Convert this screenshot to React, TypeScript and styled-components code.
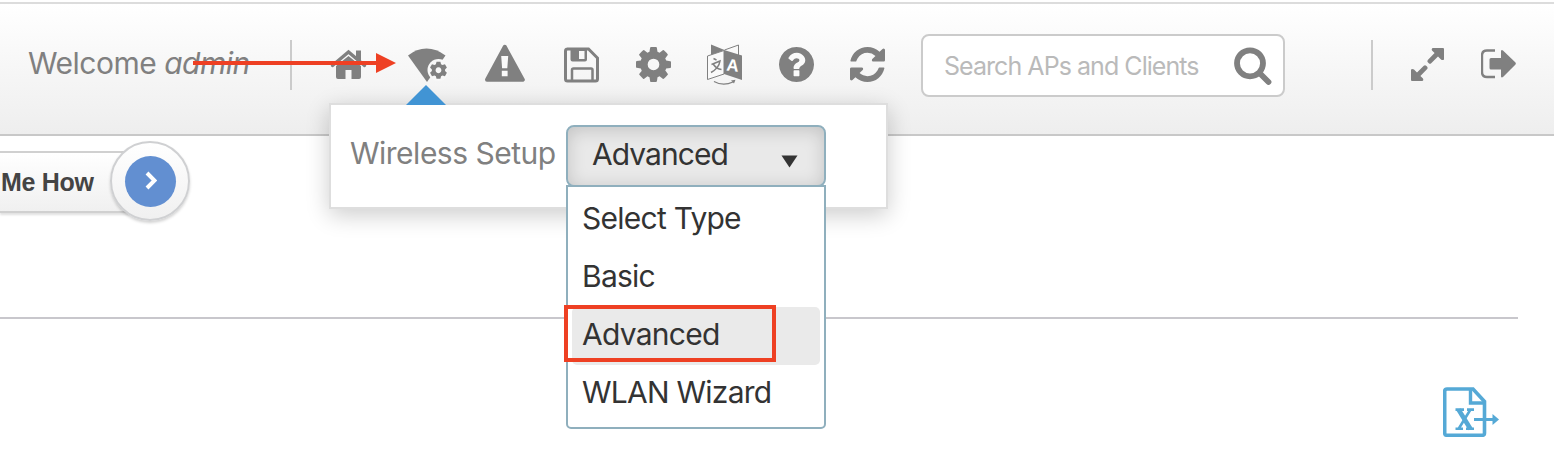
import React from 'react';
import styled, { createGlobalStyle } from 'styled-components';

const grey = '#808080';
const red = '#ee4023';

const GlobalStyle = createGlobalStyle`
  * { box-sizing: border-box; }
  body {
    margin: 0;
    background: #fff;
    overflow: hidden;
    font-family: Inter, 'Liberation Sans', sans-serif;
    font-weight: 400;
  }
`;

const Page = styled.div`
  position: relative;
  width: 1554px;
  height: 462px;
  padding-top: 2px;
  overflow: hidden;
`;

const Header = styled.header`
  display: flex;
  align-items: flex-start;
  height: 134px;
  padding: 30px 0 0 28px;
  border-top: 2px solid #dcdcdc;
  border-bottom: 2px solid #c8c8c8;
  background: linear-gradient(#fff, #eeeeee);
`;

const Welcome = styled.div`
  width: 262px;
  height: 60px;
  line-height: 58px;
  font-size: 30px;
  letter-spacing: -0.5px;
  color: ${grey};
  white-space: nowrap;
`;

const Divider = styled.div`
  width: 2px;
  height: 50px;
  margin-top: 6px;
  background: #cbcbcb;
`;

const IconButton = styled.button<{ $gap: number; $width: number }>`
  flex: none;
  width: ${(p) => p.$width}px;
  height: 48px;
  margin: 6px 0 0 ${(p) => p.$gap}px;
  padding: 0;
  border: 0;
  background: none;
  color: ${grey};
  svg { display: block; }
`;

const SearchBox = styled.label`
  display: flex;
  flex: none;
  align-items: center;
  justify-content: space-between;
  width: 364px;
  height: 63px;
  margin: 0 86px 0 36px;
  padding: 0 11px 0 21px;
  border: 2px solid #cbcbcb;
  border-radius: 8px;
  background: #fff;
`;

const SearchInput = styled.input`
  width: 280px;
  padding: 0;
  border: 0;
  outline: 0;
  background: none;
  font: 400 25px Inter, 'Liberation Sans', sans-serif;
  letter-spacing: -0.95px;
  &::placeholder { color: #bababa; opacity: 1; }
`;

const Popup = styled.section`
  position: absolute;
  left: 329px;
  top: 103px;
  display: flex;
  width: 559px;
  height: 106px;
  padding: 20px 0 0 19px;
  border: 2px solid #dedede;
  background: #fff;
  box-shadow: 0 6px 22px rgba(0, 0, 0, 0.2);
`;

const Pointer = styled.svg`
  position: absolute;
  left: 75px;
  top: -20px;
`;

const PopupLabel = styled.span`
  width: 216px;
  line-height: 57px;
  font-size: 30px;
  letter-spacing: -0.5px;
  color: ${grey};
  white-space: nowrap;
`;

const SelectWrap = styled.div`
  position: relative;
  width: 260px;
`;

const SelectBox = styled.div`
  display: flex;
  justify-content: space-between;
  height: 62px;
  padding: 0 26px 0 24px;
  border: 2px solid #8fafbd;
  border-radius: 8px;
  background: #e9e9e9;
  box-shadow: inset 0 3px 18px rgba(0, 0, 0, 0.17);
  font-size: 30px;
  letter-spacing: -0.95px;
  line-height: 55px;
  color: #333;
  svg { margin-top: 28px; }
`;

const Menu = styled.ul`
  position: absolute;
  left: 0;
  top: 60px;
  width: 260px;
  height: 244px;
  margin: 0;
  padding: 4px;
  border: 2px solid #8fafbd;
  border-radius: 0 0 5px 5px;
  background: #fff;
  list-style: none;
`;

const Option = styled.li<{ $active?: boolean }>`
  height: 58px;
  padding-left: 10px;
  border-radius: 5px;
  background: ${(p) => (p.$active ? '#eaeaea' : 'transparent')};
  font-size: 30px;
  letter-spacing: -0.75px;
  line-height: 54px;
  color: #333;
  white-space: nowrap;
`;

const Highlight = styled.div`
  position: absolute;
  left: 564px;
  top: 305px;
  width: 212px;
  height: 57px;
  border: 4px solid ${red};
`;

const Arrow = styled.svg`
  position: absolute;
  left: 193px;
  top: 53px;
`;

const Content = styled.main`
  display: flex;
  flex-direction: column;
`;

const GuideRow = styled.div`
  display: flex;
  align-items: center;
  height: 91px;
  width: 190px;
`;

const Guide = styled.div`
  display: flex;
  align-items: center;
  flex: 1;
  height: 62px;
  margin-right: -20px;
  padding: 2px 0 0 1px;
  border: solid #d0d0d0;
  border-width: 2px 0;
  background: linear-gradient(#fff, #f0f0f0);
  box-shadow: 0 2px 2px rgba(0, 0, 0, 0.12);
  font: bold 25px 'Liberation Sans', Arial, sans-serif;
  letter-spacing: -0.3px;
  color: #444;
  white-space: nowrap;
`;

const GuideButton = styled.div`
  position: relative;
  display: flex;
  flex: none;
  align-items: center;
  justify-content: center;
  width: 80px;
  height: 80px;
  margin-top: -1px;
  border: 2px solid #cfd0d2;
  border-radius: 50%;
  background: linear-gradient(#fff, #f0f0f0);
  box-shadow: 0 2px 3px rgba(0, 0, 0, 0.18);
`;

const GuideDot = styled.div`
  display: flex;
  align-items: center;
  justify-content: center;
  width: 51px;
  height: 51px;
  border-radius: 50%;
  background: #628fd1;
`;

const Rule = styled.div`
  width: 1518px;
  height: 2px;
  margin-top: 90px;
  background: #c8c7cc;
`;

const ExportRow = styled.div`
  display: flex;
  justify-content: flex-end;
  padding: 67px 54px 0 0;
`;

const HomeIcon = () => (
  <svg width="37" height="48" viewBox="330 40 37 48" fill="currentColor">
    <path d="M336 66 348.500 56 361 66V77q0 2-2 2h-7.500v-9h-6v9H338q-2 0-2-2Z" />
    <path d="M332.500 65.500 348.500 52 364.500 65.500" fill="none" stroke="currentColor" strokeWidth="3.400" strokeLinecap="round" />
    <path d="M356 50.500h5V62l-5-4Z" />
  </svg>
);

const WirelessIcon = () => (
  <svg width="40" height="48" viewBox="408 40 40 48" fill="currentColor">
    <path d="M408 55.500Q416.500 48.500 426.500 48.500T445.500 55.500L427 82Z" />
    <circle cx="438.500" cy="70" r="11" fill="#f8f8f8" />
    <path transform="translate(429.400 60.600) scale(.0108)" fillRule="evenodd" d="M660 100h360l60 230 130 75 230-65 180 310-170 165v150l170 165-180 310-230-65-130 75-60 230H660l-60-230-130-75-230 65L60 1130l170-165V815L60 650l180-310 230 65 130-75ZM840 620a270 270 0 1 0 .1 0Z" />
  </svg>
);

const WarningIcon = () => (
  <svg width="40" height="48" viewBox="485 40 40 48">
    <path d="M504.800 46.800 522.800 79.800H487Z" fill="currentColor" stroke="currentColor" strokeWidth="4" strokeLinejoin="round" />
    <path d="M501.200 56h7l-.9 12.200h-5.200ZM501.800 70.800h5.800v5.400h-5.800Z" fill="#fafafa" />
  </svg>
);

const SaveIcon = () => (
  <svg width="35" height="48" viewBox="564 40 35 48">
    <path d="M567 49H588.500L597.500 58V79q0 2-2 2H567.500q-2 0-2-2V51q0-2 2-2Z" fill="none" stroke="currentColor" strokeWidth="3" />
    <path d="M572 81V70q0-1.500 1.500-1.500H591q1.500 0 1.500 1.500V81" fill="none" stroke="currentColor" strokeWidth="2.500" />
    <path fillRule="evenodd" d="M570.500 49H587V59.500q0 2-2 2H572.500q-2 0-2-2ZM579 51v8h5.500v-8Z" fill="currentColor" />
  </svg>
);

const GearIcon = () => (
  <svg width="35" height="48" viewBox="0 0 35 48" fill="currentColor">
    <path transform="translate(-2.920 4.080) scale(.02279)" d="M1152 896q0-106-75-181t-181-75-181 75-75 181 75 181 181 75 181-75 75-181zm512-109v222q0 12-8 23t-20 13l-185 28q-19 54-39 91 35 50 107 138 10 12 10 25t-9 23q-27 37-99 108t-94 71q-12 0-26-9l-138-108q-44 23-91 38-16 136-29 186-7 28-36 28H785q-14 0-24.500-8.500T749 1635l-28-184q-49-16-90-37l-141 107q-10 9-25 9-14 0-25-11-126-114-165-168-7-10-7-23 0-12 8-23 15-21 51-66.500t54-70.500q-27-50-41-99l-183-27q-13-2-21-12.500t-8-23.500V783q0-12 8-23t19-13l186-28q14-46 39-92-40-57-107-138-10-12-10-24 0-10 9-23 26-36 98.500-107.500T465 263q13 0 26 10l138 107q44-23 91-38 16-136 29-186 7-28 36-28h222q14 0 24.500 8.500T1043 157l28 184q49 16 90 37l142-107q9-9 24-9 13 0 25 10 129 119 165 170 7 8 7 22 0 12-8 23-15 21-51 66.500t-54 70.500q26 50 41 98l183 28q13 2 21 12.500t8 23.500z" />
  </svg>
);

const TranslateIcon = () => (
  <svg width="36" height="48" viewBox="707 40 36 48">
    <path d="M711 44.500 724.500 50 718 52.500 711 55Z" fill="currentColor" />
    <path d="M724.500 50 738.500 45V55" fill="none" stroke="currentColor" />
    <path d="M707.500 56 724 50.500V74L707.500 79.500Z" fill="#fafafa" stroke="currentColor" />
    <path d="M724 50 742 55.500V80L724 74Z" fill="currentColor" />
    <path d="m713.500 58.500 3 1.500M711.500 64.500l8.500-3.500q-1 7-9 11.500M713.500 64.500q3 4.500 8 5" fill="none" stroke="currentColor" strokeWidth="1.500" />
    <text x="726.500" y="71" fill="#fff" fontSize="17" fontWeight="800" transform="rotate(6 732 65)">A</text>
    <path d="M714 81.500q9 5 19 .5" fill="none" stroke="currentColor" strokeWidth="1.200" />
    <path d="m731 80.500 4.500-.8-1.500 3.800Z" fill="currentColor" />
  </svg>
);

const HelpIcon = () => (
  <svg width="35" height="48" viewBox="0 0 35 48" fill="currentColor">
    <circle cx="17.400" cy="24.500" r="15" fill="#fafafa" />
    <path transform="translate(-2.920 4.080) scale(.02279)" d="M1024 1376v-192q0-14-9-23t-23-9h-192q-14 0-23 9t-9 23v192q0 14 9 23t23 9h192q14 0 23-9t9-23zm256-672q0-88-55.500-163T1086 425t-170-41q-243 0-371 213-15 24 8 42l132 100q7 6 19 6 16 0 25-12 53-68 86-92 34-24 86-24 48 0 85.500 26t37.500 59q0 38-20 61t-68 45q-63 28-115.500 86.500T768 1020v36q0 14 9 23t23 9h192q14 0 23-9t9-23q0-19 21.500-49.500T1100 957q32-18 49-28.500t46-35 44.500-48 28-60.500 12.500-81zm384 192q0 209-103 385.500T1281.500 1561 896 1664t-385.500-103T231 1281.500 128 896t103-385.500T510.500 231 896 128t385.500 103T1561 510.500 1664 896z" />
  </svg>
);

const RefreshIcon = () => (
  <svg width="35" height="48" viewBox="0 0 35 48" fill="currentColor">
    <path transform="translate(0 7) scale(.02279)" d="M1511 928q0 5-1 7-64 268-268 434.500T764 1536q-146 0-282.500-55T238 1324l-129 129q-19 19-45 19t-45-19-19-45V960q0-26 19-45t45-19h448q26 0 45 19t19 45-19 45l-137 137q71 66 161 102t187 36q134 0 250-65t186-179q11-17 53-117 8-23 30-23h192q13 0 22.500 9.500t9.500 22.500zm25-800v448q0 26-19 45t-45 19h-448q-26 0-45-19t-19-45 19-45l138-138Q969 256 768 256q-134 0-250 65T332 500q-11 17-53 117-8 23-30 23H50q-13 0-22.500-9.500T18 608v-7q65-268 270-434.500T768 0q146 0 284 55.500T1297 212l130-129q19-19 45-19t45 19 19 45z" />
  </svg>
);

const SearchIcon = () => (
  <svg width="38" height="38" viewBox="1234 47 38 38" fill="none" stroke={grey}>
    <circle cx="1250" cy="63.300" r="13" strokeWidth="5.800" />
    <path d="m1260 73.500 8.500 8.500" strokeWidth="5.800" strokeLinecap="round" />
  </svg>
);

const ExpandIcon = () => (
  <svg width="34" height="48" viewBox="1411 40 34 48" fill="currentColor">
    <path d="M1432.500 48H1443q1 0 1 1v10.500q-1.500 1.200-3 0l-3-3-6.800 6.800q-1.200 1-2.400 0l-1-1q-1-1.200 0-2.400l6.800-6.800-2.600-2.600q-1-1.500.5-2.500Z" />
    <path d="M1422.500 81H1412q-1 0-1-1V69.500q1.500-1.200 3 0l3 3 6.800-6.800q1.200-1 2.400 0l1 1q1 1.200 0 2.400l-6.800 6.800 2.600 2.600q1 1.500-.5 2.500Z" />
  </svg>
);

const LogoutIcon = () => (
  <svg width="36" height="48" viewBox="1481 40 36 48">
    <path d="M1495 50.500H1487q-5 0-5 5V72q0 5 5 5H1495" fill="none" stroke="currentColor" strokeWidth="2.400" />
    <path d="M1491 58H1501V51q.5-1.800 2-.5L1515.500 62.500q.8 1 0 2L1503 77q-1.500 1-2-.5V69.500H1491q-1.500 0-1.500-1.500V59.500q0-1.500 1.500-1.500Z" fill="currentColor" />
  </svg>
);

const ExportIcon = () => (
  <svg width="57" height="51" viewBox="1443 386 57 51" fill="none" stroke="#55a9d6">
    <path d="M1484.500 418V401.500L1473 389H1447q-2.300 0-2.300 2.300V433q0 2.300 2.300 2.300h35.200q2.300 0 2.300-2.300V421" strokeWidth="3.600" />
    <path d="M1470.500 389V403H1484.500" strokeWidth="3.400" />
    <path d="m1458.500 409.500 12 19.500" strokeWidth="4.600" />
    <path d="m1470.500 409.500-12 19.500M1455.500 409.600h8.500M1467 409.600h7M1455.500 428.700h7.500M1466 428.700h8" strokeWidth="2.600" />
    <path d="M1474 419.500H1494" strokeWidth="3" />
    <path d="m1492.500 414 6.500 5.500-6.500 5.500Z" fill="#55a9d6" stroke="none" />
  </svg>
);

const tools = [
  { name: 'Home', gap: 38, width: 37, Icon: HomeIcon },
  { name: 'Wireless setup', gap: 41, width: 40, Icon: WirelessIcon },
  { name: 'Alerts', gap: 37, width: 40, Icon: WarningIcon },
  { name: 'Save', gap: 39, width: 35, Icon: SaveIcon },
  { name: 'Settings', gap: 37, width: 35, Icon: GearIcon },
  { name: 'Language', gap: 36, width: 36, Icon: TranslateIcon },
  { name: 'Help', gap: 36, width: 35, Icon: HelpIcon },
  { name: 'Refresh', gap: 36, width: 35, Icon: RefreshIcon },
];

const options = ['Select Type', 'Basic', 'Advanced', 'WLAN Wizard'];

export default function App() {
  return (
    <Page>
      <GlobalStyle />
      <Header>
        <Welcome>Welcome <em>admin</em></Welcome>
        <Divider />
        {tools.map(({ name, gap, width, Icon }) => (
          <IconButton key={name} aria-label={name} $gap={gap} $width={width}><Icon /></IconButton>
        ))}
        <SearchBox>
          <SearchInput placeholder="Search APs and Clients" />
          <SearchIcon />
        </SearchBox>
        <Divider />
        <IconButton aria-label="Expand" $gap={38} $width={34}><ExpandIcon /></IconButton>
        <IconButton aria-label="Log out" $gap={36} $width={36}><LogoutIcon /></IconButton>
      </Header>
      <Content>
        <GuideRow>
          <Guide>Me How</Guide>
          <GuideButton>
            <GuideDot>
              <svg width="14" height="20" viewBox="0 0 14 20" fill="none" stroke="#fff" strokeWidth="4">
                <path d="m4 2 7.500 7.500L4 17" />
              </svg>
            </GuideDot>
          </GuideButton>
        </GuideRow>
        <Rule />
        <ExportRow><ExportIcon /></ExportRow>
      </Content>
      <Popup>
        <Pointer width="40" height="20" viewBox="0 0 40 20"><path d="M20 0 40 20H0Z" fill="#4194d4" /></Pointer>
        <PopupLabel>Wireless Setup</PopupLabel>
        <SelectWrap>
          <SelectBox>
            Advanced
            <svg width="17" height="13" viewBox="0 0 17 13"><path d="M.5.500h16l-8 12Z" fill="#333" /></svg>
          </SelectBox>
          <Menu>
            {options.map((o) => <Option key={o} $active={o === 'Advanced'}>{o}</Option>)}
          </Menu>
        </SelectWrap>
      </Popup>
      <Highlight />
      <Arrow width="204" height="20" viewBox="0 0 204 20" fill={red}>
        <path d="M0 8H183V0L203 10 183 20V12H0Z" />
      </Arrow>
    </Page>
  );
}
